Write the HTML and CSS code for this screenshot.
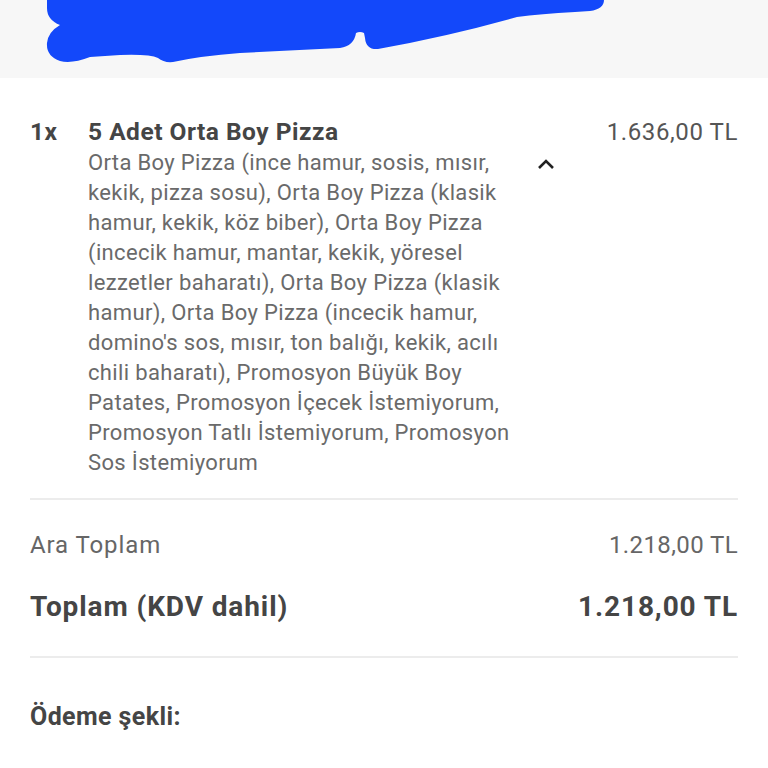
FILE: index.html
```html
<!DOCTYPE html>
<html lang="tr">
<head>
<meta charset="utf-8">
<link rel="stylesheet" href="styles.css">
</head>
<body>
<header class="topbar">
  <svg class="scribble" viewBox="0 0 768 78" width="768" height="78" aria-hidden="true">
    <path d="M47,0 L604,0 Q604,9 590,11 L575,12 Q540,14 517,17 Q450,36 378,49 Q366,50 365,38 L364,33 Q360,31 356,33 Q354,46 340,48 L240,53 Q200,56 173,62 Q164,63 158,58 Q150,54 120,55 L90,57 Q72,64 60,61 Q46,56 47,43 Q48,32 60,25 Q47,20 47,8 Z" fill="#1348fa"/>
  </svg>
</header>
<main class="content">
  <section class="item">
    <div class="qty">1x</div>
    <div class="details">
      <div class="title">5 Adet Orta Boy Pizza</div>
      <div class="desc">Orta Boy Pizza (ince hamur, sosis, mısır, kekik, pizza sosu), Orta Boy Pizza (klasik hamur, kekik, köz biber), Orta Boy Pizza (incecik hamur, mantar, kekik, yöresel lezzetler baharatı), Orta Boy Pizza (klasik hamur), Orta Boy Pizza (incecik hamur, domino's sos, mısır, ton balığı, kekik, acılı chili baharatı), Promosyon Büyük Boy Patates, Promosyon İçecek İstemiyorum, Promosyon Tatlı İstemiyorum, Promosyon Sos İstemiyorum</div>
    </div>
    <div class="chev">
      <svg viewBox="0 0 18 12" width="18" height="12" aria-hidden="true"><path d="M2,10 L9,3 L16,10" fill="none" stroke="#222" stroke-width="2.6"/></svg>
    </div>
    <div class="price">1.636,00 TL</div>
  </section>
  <section class="summary">
    <div class="row sub"><span class="label">Ara Toplam</span><span>1.218,00 TL</span></div>
    <div class="row total"><span>Toplam (KDV dahil)</span><span>1.218,00 TL</span></div>
  </section>
  <section class="payment">
    <div class="pay-title">Ödeme şekli:</div>
  </section>
</main>
</body>
</html>
```
FILE: styles.css
```css
* { box-sizing: border-box; }
html, body { margin: 0; padding: 0; background: #fff; }
body {
  font-family: Roboto, "Noto Sans", "Liberation Sans", sans-serif;
  color: #444;
  width: 768px;
}
.topbar {
  height: 78px;
  background: #f7f7f7;
  overflow: hidden;
}
.scribble { display: block; }
.content { padding: 0 30px; }
.item {
  display: flex;
  align-items: flex-start;
  padding-top: 38px;
  padding-bottom: 20px;
  border-bottom: 2px solid #ececec;
}
.qty {
  width: 58px;
  flex: none;
  font-size: 24.5px;
  font-weight: 700;
  line-height: 32px;
  letter-spacing: 0.5px;
  color: #454545;
}
.details { width: 438px; flex: none; }
.title {
  font-size: 24.5px;
  font-weight: 700;
  line-height: 32px;
  letter-spacing: 0.5px;
  color: #454545;
}
.desc {
  font-size: 22px;
  line-height: 30px;
  letter-spacing: 0.35px;
  color: #6a6a6a;
}
.chev {
  margin-left: 11px;
  margin-top: 42px;
  width: 18px;
  flex: none;
}
.chev svg { display: block; }
.price {
  margin-left: auto;
  font-size: 24px;
  line-height: 32px;
  letter-spacing: 0.6px;
  color: #555;
}
.summary {
  padding-top: 29px;
  padding-bottom: 31px;
  border-bottom: 2px solid #ececec;
}
.row {
  display: flex;
  justify-content: space-between;
}
.sub {
  font-size: 24px;
  line-height: 32px;
  letter-spacing: 0.4px;
  color: #666;
}
.sub .label { letter-spacing: 0.9px; }
.total {
  margin-top: 28px;
  font-size: 28px;
  line-height: 36px;
  letter-spacing: 0.9px;
  font-weight: 700;
  color: #454545;
}
.payment { padding-top: 44px; }
.pay-title {
  font-size: 25px;
  line-height: 30px;
  letter-spacing: 0.4px;
  font-weight: 700;
  color: #454545;
}
```
